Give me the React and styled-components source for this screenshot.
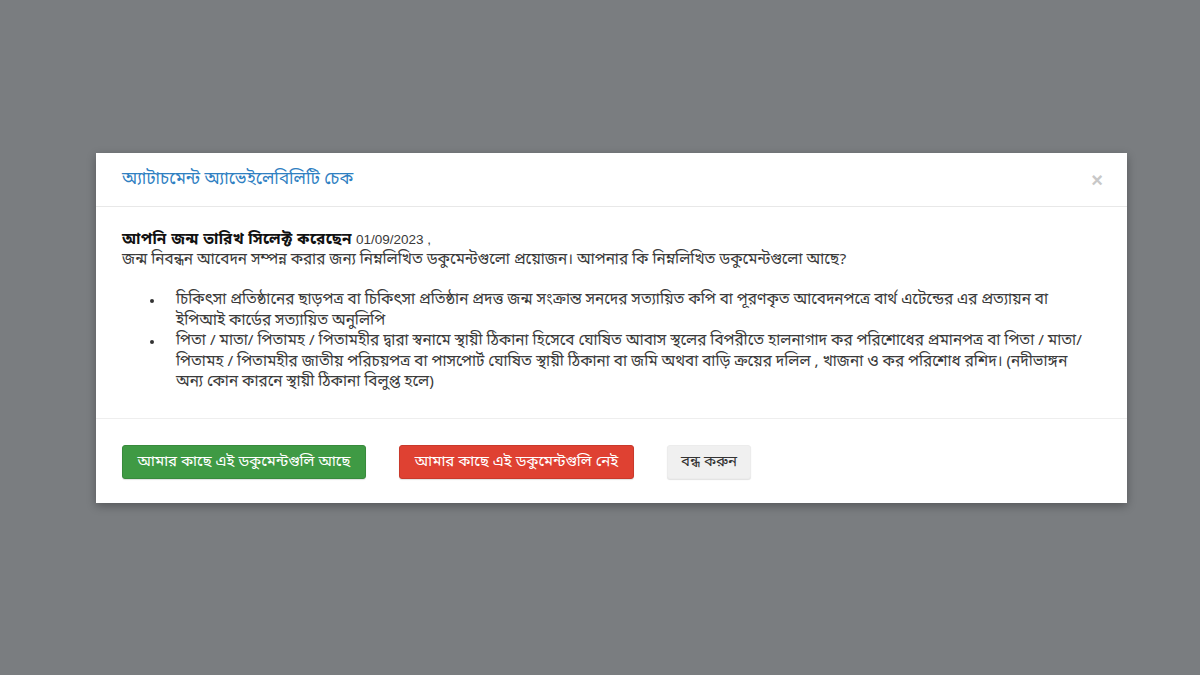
import React from "react";
import styled, { createGlobalStyle } from "styled-components";

const GlobalStyle = createGlobalStyle`
  html, body {
    margin: 0;
    padding: 0;
    background: #7a7d80;
    font-family: "Noto Sans Bengali", "Noto Sans", "Liberation Sans", sans-serif;
  }
`;

const Overlay = styled.div`
  width: 1200px;
  height: 675px;
  background: #7a7d80;
  padding: 153px 0 0 96px;
  box-sizing: border-box;
`;

const Modal = styled.div`
  width: 1031px;
  background: #fff;
  box-shadow: 0 3px 9px rgba(0, 0, 0, 0.3);
`;

const Header = styled.div`
  display: flex;
  align-items: center;
  justify-content: space-between;
  height: 54px;
  padding: 0 24px 0 26px;
  border-bottom: 1px solid #e8e8e8;
  box-sizing: border-box;
`;

const Title = styled.h4`
  margin: 0;
  font-size: 17px;
  font-weight: normal;
  color: #2f80c2;
`;

const Close = styled.span`
  font-family: "Liberation Sans", sans-serif;
  font-size: 20px;
  font-weight: bold;
  color: #c8c8c8;
  line-height: 1;
`;

const Body = styled.div`
  padding: 23px 40px 16px 26px;
  font-size: 15.3px;
  line-height: 19.5px;
  color: #3a3a3a;
  height: 211px;
  box-sizing: border-box;
`;

const Strong = styled.b`
  font-weight: bold;
  color: #111;
  letter-spacing: 0.4px;
`;

const Date = styled.span`
  font-family: "Liberation Sans", sans-serif;
  font-size: 13.5px;
`;

const List = styled.ul`
  margin: 20px 0 0;
  padding-left: 54px;
  list-style: none;
  line-height: 20.5px;
`;

const Item = styled.li`
  position: relative;
  &::before {
    content: "";
    position: absolute;
    left: -26px;
    top: 9px;
    width: 4px;
    height: 4px;
    border-radius: 50%;
    background: #333;
  }
`;

const Footer = styled.div`
  display: flex;
  align-items: center;
  gap: 33px;
  padding: 26px 26px 24px;
  border-top: 1px solid #eee;
`;

const Button = styled.button`
  height: 34px;
  padding: 0 12px;
  border: 1px solid ${(p) => p.$border};
  border-radius: 3px;
  background: ${(p) => p.$bg};
  color: ${(p) => p.$color};
  font-family: inherit;
  font-size: 15px;
  white-space: nowrap;
  width: ${(p) => p.$w}px;
  box-shadow: 0 1px 1px rgba(0, 0, 0, 0.12);
`;

export default function App() {
  return (
    <>
      <GlobalStyle />
      <Overlay>
        <Modal>
          <Header>
            <Title>অ্যাটাচমেন্ট অ্যাভেইলেবিলিটি চেক</Title>
            <Close>×</Close>
          </Header>
          <Body>
            <div>
              <Strong>আপনি জন্ম তারিখ সিলেক্ট করেছেন</Strong>{" "}
              <Date>01/09/2023 ,</Date>
            </div>
            <div>
              জন্ম নিবন্ধন আবেদন সম্পন্ন করার জন্য নিম্নলিখিত ডকুমেন্টগুলো প্রয়োজন। আপনার কি নিম্নলিখিত ডকুমেন্টগুলো আছে?
            </div>
            <List>
              <Item>
                চিকিৎসা প্রতিষ্ঠানের ছাড়পত্র বা চিকিৎসা প্রতিষ্ঠান প্রদত্ত জন্ম সংক্রান্ত সনদের সত্যায়িত কপি বা পূরণকৃত আবেদনপত্রে বার্থ এটেন্ডের এর প্রত্যায়ন বা ইপিআই কার্ডের সত্যায়িত অনুলিপি
              </Item>
              <Item>
                পিতা / মাতা/ পিতামহ / পিতামহীর দ্বারা স্বনামে স্থায়ী ঠিকানা হিসেবে ঘোষিত আবাস স্থলের বিপরীতে হালনাগাদ কর পরিশোধের প্রমানপত্র বা পিতা / মাতা/ পিতামহ / পিতামহীর জাতীয় পরিচয়পত্র বা পাসপোর্ট ঘোষিত স্থায়ী ঠিকানা বা জমি অথবা বাড়ি ক্রয়ের দলিল , খাজনা ও কর পরিশোধ রশিদ। (নদীভাঙ্গন অন্য কোন কারনে স্থায়ী ঠিকানা বিলুপ্ত হলে)
              </Item>
            </List>
          </Body>
          <Footer>
            <Button $bg="#3f9a44" $border="#388a3c" $color="#fff" $w={244}>
              আমার কাছে এই ডকুমেন্টগুলি আছে
            </Button>
            <Button $bg="#df4132" $border="#c9392b" $color="#fff" $w={235}>
              আমার কাছে এই ডকুমেন্টগুলি নেই
            </Button>
            <Button $bg="#f0f0f0" $border="#ececec" $color="#333" $w={84}>
              বন্ধ করুন
            </Button>
          </Footer>
        </Modal>
      </Overlay>
    </>
  );
}
